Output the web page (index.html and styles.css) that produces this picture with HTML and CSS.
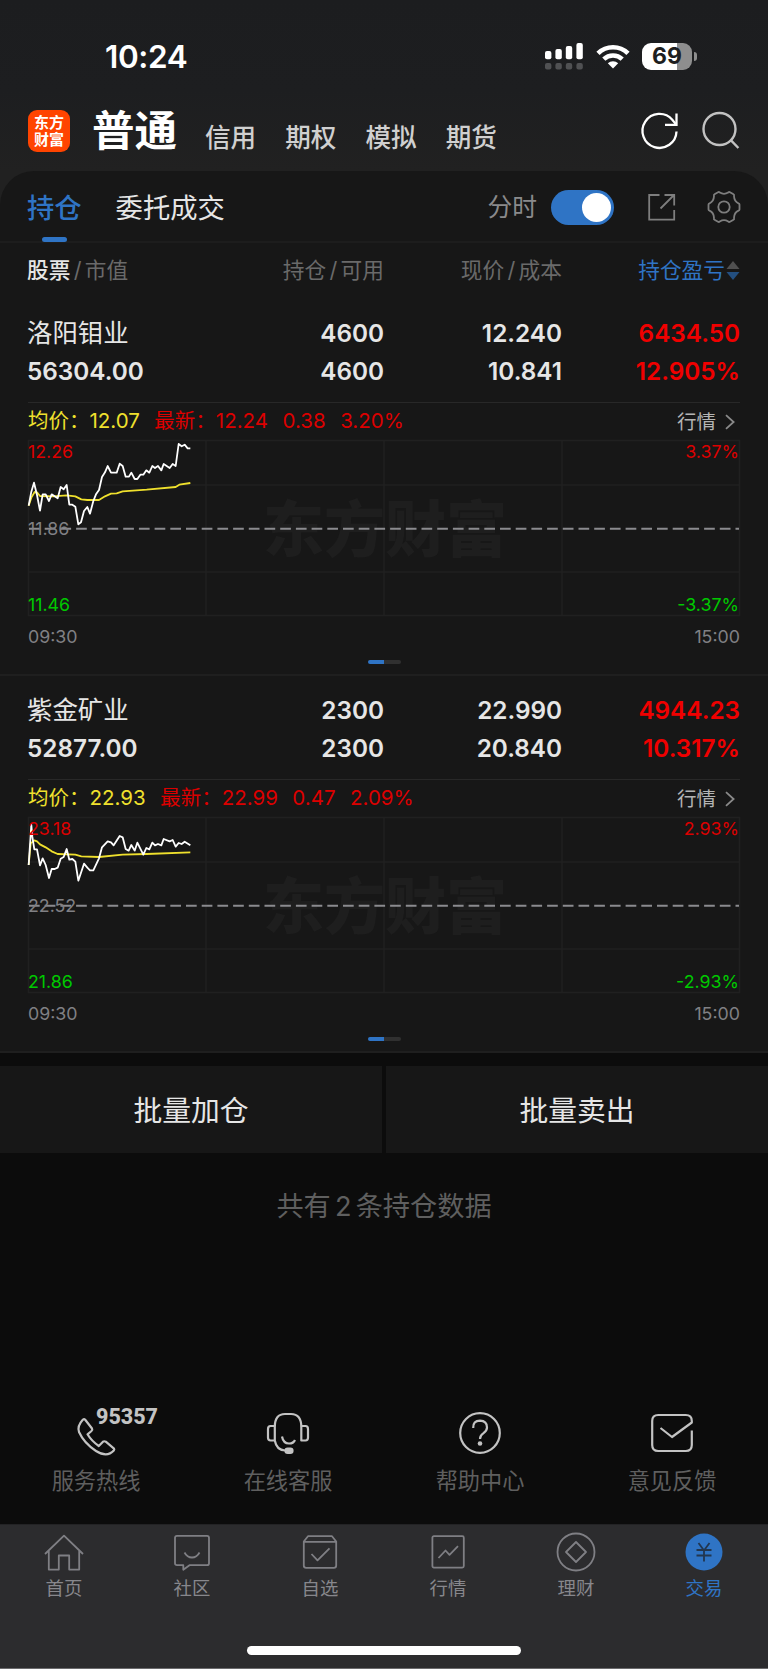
FILE: index.html
```html
<!DOCTYPE html>
<html lang="zh-CN">
<head>
    <meta charset="UTF-8">
    <meta name="viewport" content="width=device-width, initial-scale=1.0">
    <title>交易 - 持仓</title>
    <link rel="stylesheet" href="styles.css">
</head>
<body>
    <div class="page">
        <header class="top">
            <div class="status-bar">
                <span class="time">10:24</span>
                <div class="status-icons">
                    <svg class="signal" width="38" height="27" viewBox="0 0 38 27">
                        <g fill="#fff">
                            <rect x="0" y="8" width="6.4" height="8.2" rx="2"/>
                            <rect x="10.4" y="6" width="6.4" height="10.2" rx="2"/>
                            <rect x="20.8" y="3" width="6.4" height="13.2" rx="2"/>
                            <rect x="31.4" y="0" width="6.4" height="16.2" rx="2"/>
                        </g>
                        <g fill="#505153">
                            <rect x="0" y="20" width="6.4" height="6.4" rx="2"/>
                            <rect x="10.4" y="20" width="6.4" height="6.4" rx="2"/>
                            <rect x="20.8" y="20" width="6.4" height="6.4" rx="2"/>
                            <rect x="31.4" y="20" width="6.4" height="6.4" rx="2"/>
                        </g>
                    </svg>
                    <svg class="wifi" width="34" height="25" viewBox="0 0 34 25">
                        <g fill="none" stroke="#fff" stroke-width="4.6">
                            <path d="M2 9.3a21.5 21.5 0 0 1 30 0"/>
                            <path d="M7.8 15.2a13.4 13.4 0 0 1 18.4 0"/>
                        </g>
                        <path d="M17 24.4l-5.2-5.2a7.6 7.6 0 0 1 10.4 0z" fill="#fff"/>
                    </svg>
                    <div class="battery"><span>69</span></div>
                </div>
            </div>
            <div class="nav">
                <div class="logo"><span>东方</span><span>财富</span></div>
                <h1>普通</h1>
                <nav class="accounts">
                    <a>信用</a>
                    <a>期权</a>
                    <a>模拟</a>
                    <a>期货</a>
                </nav>
                <svg class="refresh" width="38" height="38" viewBox="0 0 38 38" fill="none" stroke="#fff" stroke-width="2.3">
                    <path d="M35.500 19.500a17 17 0 1 1-4.200-11.800l3.500 4.400"/>
                    <path d="M35.500 1.500v11.300H24"/>
                </svg>
                <svg class="search" width="38" height="38" viewBox="0 0 38 38" fill="none" stroke="#c2c2c2" stroke-width="2.4">
                    <circle cx="17.5" cy="17" r="16"/>
                    <path d="M28.8 28.2l7.6 7.8"/>
                </svg>
            </div>
        </header>

        <main class="panel">
            <div class="tabs">
                <a class="tab active">持仓</a>
                <a class="tab">委托成交</a>
                <span class="switch-label">分时</span>
                <span class="switch"></span>
                <svg class="share" width="28" height="28" viewBox="0 0 28 28" fill="none" stroke="#7e7e7e" stroke-width="1.8">
                    <path d="M11.5 2H1.2v24.6h25V17"/>
                    <path d="M16.5 2h9.7v10.5M26 2L12.5 15.5"/>
                </svg>
                <svg class="gear" width="34" height="34" viewBox="0 0 34 34" fill="none" stroke="#7e7e7e" stroke-width="1.8" stroke-linejoin="round">
                    <path d="M11 2.200Q12 1.600 12.800 2.600Q17 5.200 21.200 2.600Q22 1.600 23 2.200L26.500 4.200Q27.500 4.800 27 6Q27.200 11.500 31.500 13.300Q32.500 13.600 32.500 14.600V19.400Q32.500 20.400 31.500 20.700Q27.200 22.500 27 28Q27.500 29.200 26.500 29.800L23 31.800Q22 32.400 21.200 31.400Q17 28.800 12.800 31.400Q12 32.400 11 31.800L7.500 29.800Q6.500 29.200 7 28Q6.800 22.500 2.500 20.700Q1.500 20.400 1.500 19.400V14.600Q1.500 13.600 2.500 13.300Q6.800 11.500 7 6Q6.500 4.800 7.500 4.200Z"/>
                    <circle cx="17" cy="17" r="5.7"/>
                </svg>
            </div>

            <div class="columns table-head">
                <span><b>股票</b><i>/</i>市值</span>
                <span>持仓<i>/</i>可用</span>
                <span>现价<i>/</i>成本</span>
                <span class="sort">持仓盈亏
                    <svg width="14" height="19" viewBox="0 0 14 19">
                        <path d="M7 0l6.500 8H.5z" fill="#505050"/>
                        <path d="M7 19l6.500-8H.5z" fill="#234f80"/>
                    </svg>
                </span>
            </div>

            <section class="stock">
                <div class="columns values">
                    <span class="name">洛阳钼业</span>
                    <span>4600</span>
                    <span>12.240</span>
                    <span class="up">6434.50</span>
                    <span>56304.00</span>
                    <span>4600</span>
                    <span>10.841</span>
                    <span class="up">12.905%</span>
                </div>
                <div class="quote">
                    <span class="avg">均价：12.07</span>
                    <span>最新：12.24</span>
                    <span>0.38</span>
                    <span>3.20%</span>
                    <a class="more">行情
                        <svg width="10" height="16" viewBox="0 0 10 16" fill="none" stroke="#8a8a8a" stroke-width="1.8"><path d="M1 1.2l7.6 6.8L1 14.8"/></svg>
                    </a>
                </div>
                <div class="chart">
                    <span class="watermark">东方财富</span>
                    <svg width="712" height="176" viewBox="0 0 712 176" fill="none">
                        <path class="grid" d="M.5 .5h711v175H.5zM178 0v176M356 0v176M534 0v176M0 45h712M0 132h712"/>
                        <path class="middle" d="M1 88.7h710"/>
                        <g transform="translate(-28 -45) scale(.33333)" stroke-width="5.4" stroke-linejoin="round">
                            <polyline class="avg-line" points="86,332 94,308 104,291 111,292 120,303 160,304 200,301 226,304 244,313 262,315 297,315 315,304 333,296 350,295 368,289 440,284 527,276 538,269 571,264"/>
                            <polyline class="price-line" points="86,332 94,290 102,263 111,300 120,347 128,298 137,298 147,318 155,298 164,304 173,310 182,276 191,283 200,270 208,329 217,329 226,335 235,388 243,382 252,348 262,336 270,356 280,318 288,298 297,285 306,246 315,232 323,213 333,233 350,233 359,206 368,213 377,245 387,245 394,233 404,252 412,252 421,239 430,239 439,226 448,233 457,213 465,219 474,213 484,226 491,207 509,219 518,207 527,213 536,147 545,154 554,149 563,160 571,160"/>
                        </g>
                    </svg>
                    <div class="scale">
                        <span class="high">12.26</span>
                        <span>11.86</span>
                        <span class="low">11.46</span>
                    </div>
                    <div class="scale right">
                        <span class="high">3.37%</span>
                        <span class="low">-3.37%</span>
                    </div>
                </div>
                <div class="hours"><span>09:30</span><span>15:00</span></div>
                <div class="pager"></div>
            </section>

            <section class="stock">
                <div class="columns values">
                    <span class="name">紫金矿业</span>
                    <span>2300</span>
                    <span>22.990</span>
                    <span class="up">4944.23</span>
                    <span>52877.00</span>
                    <span>2300</span>
                    <span>20.840</span>
                    <span class="up">10.317%</span>
                </div>
                <div class="quote">
                    <span class="avg">均价：22.93</span>
                    <span>最新：22.99</span>
                    <span>0.47</span>
                    <span>2.09%</span>
                    <a class="more">行情
                        <svg width="10" height="16" viewBox="0 0 10 16" fill="none" stroke="#8a8a8a" stroke-width="1.8"><path d="M1 1.2l7.6 6.8L1 14.8"/></svg>
                    </a>
                </div>
                <div class="chart">
                    <span class="watermark">东方财富</span>
                    <svg width="712" height="176" viewBox="0 0 712 176" fill="none">
                        <path class="grid" d="M.5 .5h711v175H.5zM178 0v176M356 0v176M534 0v176M0 45h712M0 132h712"/>
                        <path class="middle" d="M1 88.7h710"/>
                        <g transform="translate(-28 -137) scale(.33333)" stroke-width="5.4" stroke-linejoin="round">
                            <polyline class="avg-line" points="86,555 92,490 103,481 111,484 120,493 137,502 155,514 173,522 226,524 244,529 297,531 368,524 440,522 571,517"/>
                            <polyline class="price-line" points="86,555 94,435 97,470 103,508 111,508 120,556 128,535 137,555 147,594 155,567 164,567 173,563 182,536 191,531 200,507 208,539 217,537 226,545 235,602 252,551 262,563 270,571 280,571 297,535 306,502 323,484 333,487 341,496 359,468 368,472 377,507 386,512 394,495 404,512 412,488 430,524 439,504 448,508 457,488 465,496 474,492 484,496 491,477 509,484 518,480 527,500 536,489 545,492 554,485 571,496"/>
                        </g>
                    </svg>
                    <div class="scale">
                        <span class="high">23.18</span>
                        <span>22.52</span>
                        <span class="low">21.86</span>
                    </div>
                    <div class="scale right">
                        <span class="high">2.93%</span>
                        <span class="low">-2.93%</span>
                    </div>
                </div>
                <div class="hours"><span>09:30</span><span>15:00</span></div>
                <div class="pager"></div>
            </section>
        </main>

        <div class="batch">
            <button>批量加仓</button>
            <button>批量卖出</button>
        </div>
        <p class="total">共有 2 条持仓数据</p>

        <div class="services">
            <a>
                <div class="service-icon">
                    <svg width="42" height="42" viewBox="0 0 42 42" fill="none" stroke="#c3c3c3" stroke-width="2.2" stroke-linejoin="round">
                        <path d="M10 8L17 17Q17.8 18.5 16.5 19.5L12.5 22.8Q16.5 29.5 23.8 34.5L28 30.2Q29.2 29.3 30.8 30.2L39 37.2Q39.6 38.1 38.8 39Q32 46.5 21 39.5Q9 31.5 4 20.5Q2 14.5 7.8 8.3Q9 7.2 10 8Z" transform="translate(0 -0.5)"/>
                    </svg>
                    <span class="hotline">95357</span>
                </div>
                服务热线
            </a>
            <a>
                <div class="service-icon">
                    <svg width="42" height="42" viewBox="0 0 42 42" fill="none" stroke="#c3c3c3" stroke-width="2.2" stroke-linejoin="round">
                        <path d="M7.800 28.500V15Q7.800 2 18 2h6Q34.300 2 34.300 15v13.500h4.200q2.500 0 2.500-3V17q0-3-2.500-3h-4.200M7.800 14H3.600Q1 14 1 17v8.500q0 3 2.600 3h4.200Q9.500 38 18 38.500"/>
                        <path d="M15 24.500q1.300 7 7 7 4.500 0 6-3.500"/>
                        <rect x="18.500" y="36.500" width="7" height="4.500" rx="2.200" fill="#c3c3c3"/>
                    </svg>
                </div>
                在线客服
            </a>
            <a>
                <div class="service-icon">
                    <svg width="42" height="42" viewBox="0 0 42 42" fill="none" stroke="#c3c3c3" stroke-width="2.2">
                        <circle cx="21" cy="21" r="19.8"/>
                        <path d="M14.200 16q-.4-7.200 6.800-7.300 7 .3 7 6.800 0 3-3.500 5.700-3.500 2.300-3.500 5.800"/>
                        <circle cx="21" cy="31.500" r="2.300" fill="#c3c3c3" stroke="none"/>
                    </svg>
                </div>
                帮助中心
            </a>
            <a>
                <div class="service-icon">
                    <svg width="42" height="42" viewBox="0 0 42 42" fill="none" stroke="#c3c3c3" stroke-width="2.200" stroke-linejoin="round">
                        <path d="M40.800 18.500V33q0 6-6 6H7.200q-6 0-6-6V9q0-6 6-6h27.600q6 0 6 6v1.500L21 25 9.500 16"/>
                    </svg>
                </div>
                意见反馈
            </a>
        </div>

        <footer class="tab-bar">
            <a>
                <svg width="40" height="40" viewBox="0 0 40 40">
                    <path d="M1 20L20 1.600 39 20M4.800 17v18.600h10V21.500h10.400v14.100h10V17"/>
                </svg>
                首页
            </a>
            <a>
                <svg width="40" height="40" viewBox="0 0 40 40">
                    <path d="M5 1.800h30q2 0 2 2v25.400q0 2-2 2H17.500l-6.200 4.600v-4.600H5q-2 0-2-2V3.800q0-2 2-2z"/>
                    <path d="M12.500 18.500q2.700 5 7.500 5t7.500-5"/>
                </svg>
                社区
            </a>
            <a>
                <svg width="40" height="40" viewBox="0 0 40 40">
                    <path d="M3.800 7.500L8 2.200h24l4.200 5.300v24q0 2.300-2.300 2.300H6.100q-2.300 0-2.300-2.300zM3.800 7.800h32.400M11.500 20l6 6.300 12-12"/>
                </svg>
                自选
            </a>
            <a>
                <svg width="40" height="40" viewBox="0 0 40 40">
                    <rect x="4.400" y="2.200" width="31.400" height="31.400" rx="1.500"/>
                    <path d="M10.500 24l7-7.500 4 4.300 8.500-8.600"/>
                </svg>
                行情
            </a>
            <a>
                <svg width="40" height="40" viewBox="0 0 40 40">
                    <circle cx="20" cy="18" r="18.500"/>
                    <path d="M20 8l10 10-10 10-10-10z"/>
                </svg>
                理财
            </a>
            <a class="active">
                <svg width="40" height="40" viewBox="0 0 40 40">
                    <circle cx="20" cy="18" r="18.500" fill="#2f74c5" stroke="none"/>
                    <path d="M14.500 9l5.500 7.500L25.500 9M20 16v11.500M12.500 16h15M12.500 21.500h15" stroke="#22364f"/>
                </svg>
                交易
            </a>
        </footer>
        <div class="home-indicator"></div>
    </div>
</body>
</html>
```
FILE: styles.css
```css
* {
    box-sizing: border-box;
}

body {
    margin: 0;
    background-color: #0c0c0c;
    color: #e6e6e6;
    font-family: Inter, "Noto Sans CJK SC", sans-serif;
}

svg {
    display: block;
    overflow: visible;
    flex: none;
}

.page {
    width: 768px;
    height: 1669px;
    display: flex;
    flex-direction: column;
    overflow: hidden;
}

/* status bar and account switcher */
.top {
    height: 205px;
    margin-bottom: -34px;
    background: linear-gradient(#1c1d1f 0, #1d1e20 90px, #212121 171px);
}

.status-bar {
    height: 95px;
    padding: 18px 79px 0 105px;
    display: flex;
    justify-content: space-between;
    align-items: center;
}

.time {
    font-size: 31.5px;
    font-weight: 600;
    letter-spacing: -0.4px;
    color: #fff;
}

.status-icons {
    display: flex;
    align-items: center;
}

.wifi {
    margin: 0 12px 0 13px;
}

.battery {
    width: 50px;
    height: 27px;
    border-radius: 9px;
    background: linear-gradient(90deg, #fff 70%, #8e8e8e 70%);
    color: #1d1e20;
    font-size: 23px;
    font-weight: 700;
    line-height: 27px;
    text-align: center;
    position: relative;
    margin-right: -3px;
}

.battery::after {
    content: "";
    position: absolute;
    left: 51.5px;
    top: 9px;
    width: 3.5px;
    height: 9px;
    border-radius: 0 5px 5px 0;
    background-color: #8e8e8e;
}

.nav {
    height: 76px;
    padding: 0 28px;
    display: flex;
    align-items: center;
}

.logo {
    width: 42px;
    height: 42px;
    margin-top: -4px;
    padding-top: 4px;
    border-radius: 9px;
    background-color: #ff4400;
    color: #fff;
    font-size: 15px;
    font-weight: 700;
    line-height: 17px;
    display: flex;
    flex-direction: column;
    align-items: center;
}

.nav h1 {
    margin: -5px 0 0 22px;
    font-size: 42.5px;
    line-height: 60px;
    font-weight: 600;
    color: #fff;
}

.accounts {
    display: flex;
    gap: 29px;
    margin: 10px auto 0 28px;
    font-size: 25.6px;
    line-height: 36px;
    font-weight: 500;
    color: #d0d0d0;
}

.refresh {
    margin: -4px 23px 0 0;
}

.search {
    margin: -4px 0 0 0;
}

/* holdings panel */
.panel {
    background-color: #171717;
    border-radius: 34px 34px 0 0;
}

.tabs {
    height: 72px;
    padding: 2px 28px 0 27px;
    display: flex;
    align-items: center;
    border-bottom: 2px solid #1d1d1d;
}

.tab {
    height: 68px;
    margin-right: 34px;
    font-size: 27.3px;
    line-height: 71px;
    position: relative;
}

.tab.active {
    color: #2f74c5;
    font-weight: 500;
}

.tab.active::after {
    content: "";
    position: absolute;
    left: 15px;
    bottom: -1px;
    width: 25px;
    height: 5px;
    border-radius: 3px;
    background-color: #2f74c5;
}

.switch-label {
    margin: 0 14px 0 auto;
    font-size: 24.8px;
    line-height: 34px;
    color: #8a8a8c;
}

.switch {
    width: 63px;
    height: 35px;
    padding: 3px;
    border-radius: 18px;
    background-color: #2f74c5;
    display: flex;
    justify-content: flex-end;
}

.switch::after {
    content: "";
    width: 29px;
    height: 29px;
    border-radius: 50%;
    background-color: #fff;
}

.share {
    margin: 0 31px 0 34px;
}

.gear {
    margin-right: -1px;
}

.columns {
    display: grid;
    grid-template-columns: 180px 177px 178px 178px;
    padding: 0 28px 0 27px;
    text-align: right;
}

.table-head {
    height: 56px;
    line-height: 54px;
    font-size: 21.7px;
    color: #6a6a6a;
}

.columns span:nth-child(4n + 1) {
    text-align: left;
}

.table-head b {
    font-weight: 500;
    color: #e6e6e6;
}

.table-head i {
    font-style: normal;
    margin: 0 3.3px;
}

.sort {
    height: 54px;
    display: flex;
    justify-content: flex-end;
    align-items: center;
    gap: 1px;
    color: #2f74c5;
}

.stock {
    height: 377px;
    padding-top: 15px;
    border-bottom: 2px solid #1f1f1f;
}

.values {
    height: 88px;
    grid-auto-rows: 38px;
    line-height: 38px;
    font-size: 24.3px;
    font-weight: 600;
}

.values .name {
    font-size: 25.4px;
    font-weight: 400;
}

.up {
    color: #f00000;
}

.quote {
    height: 38px;
    margin: 0 28px;
    border-top: 1px solid #282828;
    display: flex;
    gap: 14.5px;
    font-size: 20.5px;
    line-height: 36px;
    color: #dc0000;
}

.avg {
    color: #efe02d;
}

.more {
    height: 37px;
    margin: 0 5px 0 auto;
    display: flex;
    align-items: center;
    gap: 9px;
    font-size: 19.5px;
    color: #b4b4b4;
}

.chart {
    height: 176px;
    margin: 0 28px;
    position: relative;
}

.watermark {
    position: absolute;
    left: 235px;
    top: 46px;
    font-size: 61px;
    line-height: 88px;
    font-weight: 900;
    color: #1e1e1e;
}

.chart svg {
    position: relative;
}

.grid {
    stroke: #202020;
    stroke-width: 1.5;
}

.middle {
    stroke: #8b8b8f;
    stroke-width: 1.9;
    stroke-dasharray: 10.7 5;
}

.avg-line {
    stroke: #efe02d;
}

.price-line {
    stroke: #fff;
}

.scale {
    position: absolute;
    inset: 1px auto 1px 0;
    display: flex;
    flex-direction: column;
    justify-content: space-between;
    font-size: 17.8px;
    line-height: 21px;
    color: #808084;
}

.scale.right {
    inset: 1px 1px 1px auto;
    text-align: right;
}

.scale .high {
    color: #dc0000;
}

.scale .low {
    color: #00c800;
}

.hours {
    margin: 0 28px;
    height: 44px;
    display: flex;
    justify-content: space-between;
    font-size: 17.8px;
    line-height: 41px;
    color: #808084;
}

.pager {
    width: 33px;
    height: 4px;
    margin: 0 auto;
    border-radius: 2px;
    background: linear-gradient(90deg, #2f74c5 49%, #303030 49%);
}

/* batch actions */
.batch {
    display: flex;
    gap: 4px;
    margin-top: 13px;
}

.batch button {
    flex: 1;
    height: 87px;
    border: none;
    padding: 0 0 2px;
    background-color: #171717;
    color: #e6e6e6;
    font-family: inherit;
    font-size: 28.8px;
}

.total {
    margin: 33px 0 0;
    font-size: 27.2px;
    line-height: 42px;
    word-spacing: -3.5px;
    text-align: center;
    color: #5f5f5f;
}

.services {
    margin-top: auto;
    height: 123px;
    display: flex;
}

.services a {
    flex: 1;
    display: flex;
    flex-direction: column;
    align-items: center;
    gap: 10px;
    font-size: 22.2px;
    line-height: 34px;
    color: #5f5f5f;
}

.service-icon {
    position: relative;
    padding-top: 11px;
}

.hotline {
    position: absolute;
    left: 21px;
    top: 3px;
    font-family: Roboto, sans-serif;
    font-size: 21.5px;
    font-weight: 800;
    line-height: 26px;
    color: #c3c3c3;
}

/* bottom tab bar */
.tab-bar {
    height: 122px;
    padding-top: 9px;
    background-color: #2c2c2e;
    border-top: 1px solid #232325;
    display: flex;
}

.tab-bar a {
    flex: 1;
    display: flex;
    flex-direction: column;
    align-items: center;
    font-size: 18.4px;
    line-height: 28px;
    color: #87878c;
}

.tab-bar svg {
    fill: none;
    stroke: #7f7f84;
    stroke-width: 1.8;
    stroke-linejoin: round;
}

.tab-bar .active {
    color: #2f74c5;
}

.home-indicator {
    height: 23px;
    background-color: #2c2c2e;
    border-bottom: 1px solid #6b6b6d;
}

.home-indicator::before {
    content: "";
    display: block;
    width: 274px;
    height: 9px;
    margin: 0 auto;
    border-radius: 5px;
    background-color: #fff;
}
```
